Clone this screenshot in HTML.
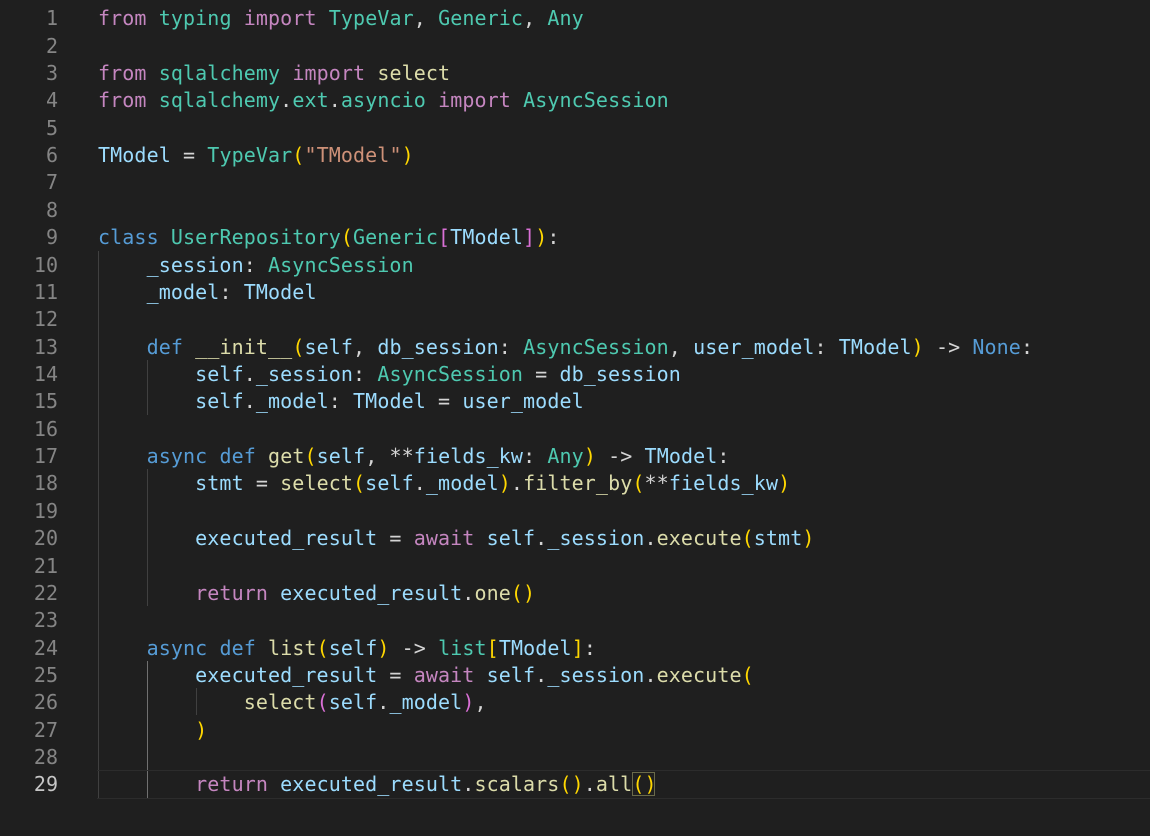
<!DOCTYPE html><html><head><meta charset="utf-8"><style>
body{margin:0;background:#1f1f1f;width:1150px;height:836px;overflow:hidden;position:relative;font-family:"DejaVu Sans Mono","Liberation Mono",monospace;font-size:20px;}
.l{position:absolute;left:0;height:27.36px;line-height:27.36px;white-space:pre;color:#d4d4d4;width:1150px}
.n{position:absolute;right:1092px;color:#858585;text-align:right}
.c{position:absolute;left:98px;letter-spacing:0.1px}
.k{color:#c586c0}.t{color:#4ec9b0}.v{color:#9cdcfe}.f{color:#dcdcaa}.s{color:#ce9178}.b{color:#569cd6}.y{color:#ffd700}.p{color:#da70d6}
.g{position:absolute;width:1px;background:#404040}
</style></head><body>
<div class="g" style="left:98px;top:251px;height:547px"></div>
<div class="g" style="left:147px;top:360px;height:55px"></div>
<div class="g" style="left:147px;top:469px;height:137px"></div>
<div class="g" style="left:147px;top:661px;height:137px;background:#707070"></div>
<div class="g" style="left:196px;top:688px;height:27px"></div>
<div style="position:absolute;left:97px;top:770px;width:1053px;height:27px;border-top:1px solid #2c2c2c;border-bottom:1px solid #2c2c2c"></div>
<div style="position:absolute;left:632px;top:772px;width:23px;height:24px;border:1px solid #6a6a4a;box-sizing:border-box"></div>
<div id="code"></div>
<script>
(function(){
var L=[
'<span class="k">from</span> <span class="t">typing</span> <span class="k">import</span> <span class="t">TypeVar</span>, <span class="t">Generic</span>, <span class="t">Any</span>',
'',
'<span class="k">from</span> <span class="t">sqlalchemy</span> <span class="k">import</span> <span class="f">select</span>',
'<span class="k">from</span> <span class="t">sqlalchemy</span>.<span class="t">ext</span>.<span class="t">asyncio</span> <span class="k">import</span> <span class="t">AsyncSession</span>',
'',
'<span class="v">TModel</span> = <span class="t">TypeVar</span><span class="y">(</span><span class="s">"TModel"</span><span class="y">)</span>',
'','',
'<span class="b">class</span> <span class="t">UserRepository</span><span class="y">(</span><span class="t">Generic</span><span class="p">[</span><span class="v">TModel</span><span class="p">]</span><span class="y">)</span>:',
'    <span class="v">_session</span>: <span class="t">AsyncSession</span>',
'    <span class="v">_model</span>: <span class="v">TModel</span>',
'',
'    <span class="b">def</span> <span class="f">__init__</span><span class="y">(</span><span class="v">self</span>, <span class="v">db_session</span>: <span class="t">AsyncSession</span>, <span class="v">user_model</span>: <span class="v">TModel</span><span class="y">)</span> -> <span class="b">None</span>:',
'        <span class="v">self</span>.<span class="v">_session</span>: <span class="t">AsyncSession</span> = <span class="v">db_session</span>',
'        <span class="v">self</span>.<span class="v">_model</span>: <span class="v">TModel</span> = <span class="v">user_model</span>',
'',
'    <span class="b">async</span> <span class="b">def</span> <span class="f">get</span><span class="y">(</span><span class="v">self</span>, **<span class="v">fields_kw</span>: <span class="t">Any</span><span class="y">)</span> -> <span class="v">TModel</span>:',
'        <span class="v">stmt</span> = <span class="f">select</span><span class="y">(</span><span class="v">self</span>.<span class="v">_model</span><span class="y">)</span>.<span class="f">filter_by</span><span class="y">(</span>**<span class="v">fields_kw</span><span class="y">)</span>',
'',
'        <span class="v">executed_result</span> = <span class="k">await</span> <span class="v">self</span>.<span class="v">_session</span>.<span class="f">execute</span><span class="y">(</span><span class="v">stmt</span><span class="y">)</span>',
'',
'        <span class="k">return</span> <span class="v">executed_result</span>.<span class="f">one</span><span class="y">()</span>',
'',
'    <span class="b">async</span> <span class="b">def</span> <span class="f">list</span><span class="y">(</span><span class="v">self</span><span class="y">)</span> -> <span class="t">list</span><span class="y">[</span><span class="v">TModel</span><span class="y">]</span>:',
'        <span class="v">executed_result</span> = <span class="k">await</span> <span class="v">self</span>.<span class="v">_session</span>.<span class="f">execute</span><span class="y">(</span>',
'            <span class="f">select</span><span class="p">(</span><span class="v">self</span>.<span class="v">_model</span><span class="p">)</span>,',
'        <span class="y">)</span>',
'',
'        <span class="k">return</span> <span class="v">executed_result</span>.<span class="f">scalars</span><span class="y">()</span>.<span class="f">all</span><span class="y">()</span>'
];
var h='';
for(var i=0;i<L.length;i++){var yy=5.3+i*27.36;
h+='<div class="l" style="top:'+yy+'px"><span class="n"'+(i==28?' style="color:#c6c6c6"':'')+'>'+(i+1)+'</span><span class="c">'+L[i]+'</span></div>';}
document.getElementById('code').innerHTML=h;
})();
</script>
</body></html>
